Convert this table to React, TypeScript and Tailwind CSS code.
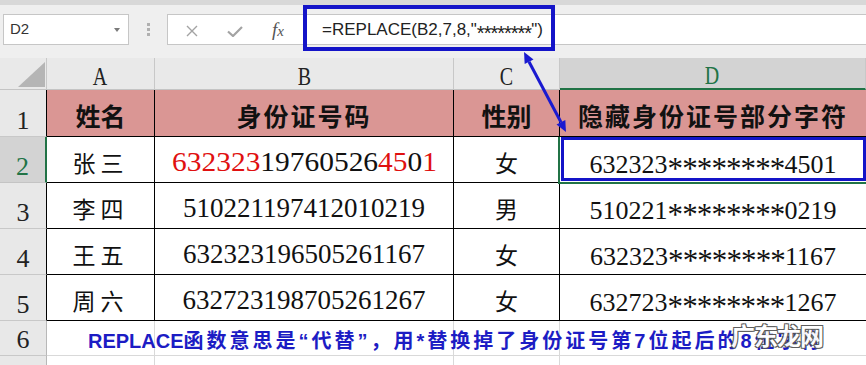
import React from "react";

type DataRow = {
  n: number;
  name: string;
  id: React.ReactNode;
  sex: string;
  head: string;
  tail: string;
};

const GRID = "grid grid-cols-[47px_108px_299px_106px_306px]";

const rows: DataRow[] = [
  {
    n: 2,
    name: "张三",
    id: (
      <span className="inline-block scale-x-[1.09]">
        <span className="text-[#e01010]">632323</span>
        19760526
        <span className="text-[#e01010]">45</span>0
        <span className="text-[#e01010]">1</span>
      </span>
    ),
    sex: "女",
    head: "632323",
    tail: "4501",
  },
  { n: 3, name: "李四", id: "510221197412010219", sex: "男", head: "510221", tail: "0219" },
  { n: 4, name: "王五", id: "632323196505261167", sex: "女", head: "632323", tail: "1167" },
  { n: 5, name: "周六", id: "632723198705261267", sex: "女", head: "632723", tail: "1267" },
];

function RowHead({ n, active = false }: { n: number; active?: boolean }) {
  if (active) {
    return (
      <div className="flex items-end justify-center pb-[2px] bg-[#d3d3d3] border-b border-b-[#c4c4c4] border-r-2 border-r-[#217346] font-['Liberation_Serif',serif] text-[26px] leading-none text-[#217346]">
        {n}
      </div>
    );
  }
  return (
    <div className="flex items-end justify-center pb-[2px] bg-[#e8e8e8] border-b border-b-[#c8c8c8] border-r border-r-black font-['Liberation_Serif',serif] text-[26px] leading-none text-[#222]">
      {n}
    </div>
  );
}

function ColHead({ label, active = false }: { label: string; active?: boolean }) {
  return (
    <div
      className={
        active
          ? "flex items-end justify-center bg-[#d3d3d3] border-r border-r-[#c8c8c8] border-b-2 border-b-[#217346] font-['Liberation_Serif',serif] text-[25px] leading-none text-[#217346]"
          : "flex items-end justify-center border-r border-r-[#c8c8c8] border-b border-b-[#c4c4c4] font-['Liberation_Serif',serif] text-[25px] leading-none text-[#222]"
      }
    >
      <span className="inline-block scale-x-[0.8]">{label}</span>
    </div>
  );
}

// masked id: asterisks drawn larger and lowered to sit mid-height like the sheet font
function Masked({ head, tail }: { head: string; tail: string }) {
  return (
    <span className="whitespace-nowrap">
      {head}
      <span className="relative top-[6px] text-[31px] tracking-[-0.9px]">********</span>
      {tail}
    </span>
  );
}

export default function App() {
  return (
    <div className="relative w-[866px] h-[365px] overflow-hidden bg-white flex flex-col select-none">
      {/* formula bar */}
      <div className="h-[58px] shrink-0 bg-[#efefef] flex flex-col">
        <div className="h-[5px] bg-[#d8d8d8]" />
        <div className="mt-[9px] flex h-[31px]">
          <div className="ml-[3px] w-[126px] bg-white border border-[#c6c6c6] flex items-center justify-between pl-[6px] pr-[8px]">
            <span className="font-['Liberation_Sans',sans-serif] text-[15px] text-[#333]">D2</span>
            <span className="w-0 h-0 border-x-[3.5px] border-x-transparent border-t-[4px] border-t-[#7a7a7a]" />
          </div>
          <div className="w-[38px] flex flex-col items-center justify-center gap-[2px]">
            <span className="w-[3px] h-[3px] bg-[#b0b0b0]" />
            <span className="w-[3px] h-[3px] bg-[#b0b0b0]" />
            <span className="w-[3px] h-[3px] bg-[#b0b0b0]" />
          </div>
          <div className="flex-1 flex bg-white border border-r-0 border-[#c6c6c6]">
            <div className="w-[136px] flex items-center">
              <svg className="ml-[18px] mt-[2px]" width="12" height="12" viewBox="0 0 12 12">
                <path d="M1 1L11 11M11 1L1 11" stroke="#a3a3a3" strokeWidth="1.4" fill="none" />
              </svg>
              <svg className="ml-[29px] mt-[3px]" width="16" height="11" viewBox="0 0 16 11">
                <path d="M1 5.5L6 10L15 1" stroke="#a3a3a3" strokeWidth="2.2" fill="none" />
              </svg>
              <span className="ml-[29px] font-['Liberation_Serif',serif] italic text-[19px] leading-none text-[#555]">
                f<span className="text-[15px]">x</span>
              </span>
            </div>
            <div className="flex-1 flex items-center pl-[18px] font-['Liberation_Sans',sans-serif] text-[17px] text-[#222]">
              =REPLACE(B2,7,8,"<span className="relative top-[3px] text-[20px] tracking-[-1px]">********</span>")
            </div>
          </div>
        </div>
      </div>

      {/* column headers */}
      <div className={`${GRID} h-[32px] shrink-0 bg-[#e9e9e9]`}>
        <div className="flex items-end justify-end pr-[1px] pb-[2px] border-r border-r-[#c8c8c8] border-b border-b-[#c4c4c4]">
          <svg width="27" height="25" viewBox="0 0 27 25">
            <polygon points="27,0 27,25 0,25" fill="#b5b5b5" />
          </svg>
        </div>
        <ColHead label="A" />
        <ColHead label="B" />
        <ColHead label="C" />
        <ColHead label="D" active />
      </div>

      {/* row 1 */}
      <div className={`${GRID} h-[47px] shrink-0`}>
        <RowHead n={1} />
        <div className="flex items-center justify-center pt-[4px] bg-[#da9694] border-r border-b border-black font-['Noto_Sans_CJK_SC',sans-serif] font-bold text-[25px] leading-none text-[#111]">
          姓名
        </div>
        <div className="flex items-center justify-center pt-[4px] bg-[#da9694] border-r border-b border-black font-['Noto_Sans_CJK_SC',sans-serif] font-bold text-[25px] leading-none tracking-[2px] text-[#111]">
          身份证号码
        </div>
        <div className="flex items-center justify-center pt-[4px] bg-[#da9694] border-r border-b border-black font-['Noto_Sans_CJK_SC',sans-serif] font-bold text-[25px] leading-none text-[#111]">
          性别
        </div>
        <div className="flex items-center justify-center pt-[4px] bg-[#da9694] border-b border-black font-['Noto_Sans_CJK_SC',sans-serif] font-bold text-[25px] leading-none tracking-[2px] text-[#111]">
          隐藏身份证号部分字符
        </div>
      </div>

      {/* rows 2-5 */}
      {rows.map((r) => (
        <div key={r.n} className={`${GRID} h-[46px] shrink-0`}>
          <RowHead n={r.n} active={r.n === 2} />
          <div className="flex items-center justify-center pt-[5px] border-r border-b border-black font-['Noto_Sans_CJK_SC',sans-serif] text-[23px] leading-none tracking-[5px] text-[#111]">
            {r.name}
          </div>
          <div className="flex items-center justify-center pt-[5px] border-r border-b border-black font-['Liberation_Serif',serif] text-[27px] leading-none text-[#111]">
            {r.id}
          </div>
          <div className="flex items-center justify-center pt-[5px] border-r border-b border-black font-['Noto_Sans_CJK_SC',sans-serif] text-[23px] leading-none text-[#111]">
            {r.sex}
          </div>
          <div className="relative flex items-center justify-center pt-[5px] border-b border-black font-['Liberation_Serif',serif] text-[26px] leading-none text-[#111]">
            <Masked head={r.head} tail={r.tail} />
            {r.n === 2 && (
              <>
                <span className="absolute left-[1px] top-0 right-0 h-[44px] border-[3px] border-[#1414c8]" />
                <span className="absolute -left-[2px] top-0 -bottom-[2px] w-[2px] bg-[#217346] z-10" />
                <span className="absolute -left-[2px] right-0 -bottom-[2px] h-[2px] bg-[#217346] z-10" />
              </>
            )}
          </div>
        </div>
      ))}

      {/* row 6 */}
      <div className="flex h-[35px] shrink-0">
        <div className="w-[47px] flex items-end justify-center pb-[2px] bg-[#e8e8e8] border-b border-b-[#c8c8c8] border-r border-r-[#b8b8b8] font-['Liberation_Serif',serif] text-[26px] leading-none text-[#222]">
          6
        </div>
        <div className="relative flex-1">
          <div className="grid grid-cols-[108px_299px_106px_306px] h-full">
            <div className="border-r border-b border-[#d9d9d9]" />
            <div className="border-r border-b border-[#d9d9d9]" />
            <div className="border-r border-b border-[#d9d9d9]" />
            <div className="border-b border-[#d9d9d9]" />
          </div>
          <div className="absolute inset-0 flex items-center pt-[4px] pl-[41px] font-['Liberation_Sans','Noto_Sans_CJK_SC',sans-serif] font-bold text-[20px] leading-none tracking-[3px] text-[#1c1cc4] whitespace-nowrap">
            <span className="tracking-normal">REPLACE</span>
            函数意思是“代替”，用*替换掉了身份证号第7位起后的8位字符
          </div>
        </div>
      </div>

      {/* row 7 */}
      <div className="flex flex-1">
        <div className="w-[47px] bg-[#e8e8e8] border-r border-r-[#b8b8b8]" />
        <div className="flex-1 grid grid-cols-[108px_299px_106px_306px]">
          <div className="border-r border-[#d9d9d9]" />
          <div className="border-r border-[#d9d9d9]" />
          <div className="border-r border-[#d9d9d9]" />
          <div />
        </div>
      </div>

      {/* annotations */}
      <div className="absolute left-[303px] top-[5px] w-[252px] h-[46px] border-4 border-[#1414c8]" />
      <svg className="absolute left-0 top-0 pointer-events-none" width="866" height="365" viewBox="0 0 866 365">
        <line x1="529" y1="61.7" x2="561" y2="122.3" stroke="#1a1ad0" strokeWidth="3" />
        <polygon points="524,52 524.7,64 533.5,59.4" fill="#1a1ad0" />
        <polygon points="566,132 556.5,124.6 565.3,120" fill="#1a1ad0" />
      </svg>
      <div className="absolute left-[731px] top-[323px] font-['Noto_Sans_CJK_SC',sans-serif] font-bold text-[24px] leading-none tracking-[-1px] text-white opacity-95 [text-shadow:1px_1px_0_#555,-1px_-1px_0_#555,1px_-1px_0_#555,-1px_1px_0_#555]">
        广东龙网
      </div>
    </div>
  );
}
